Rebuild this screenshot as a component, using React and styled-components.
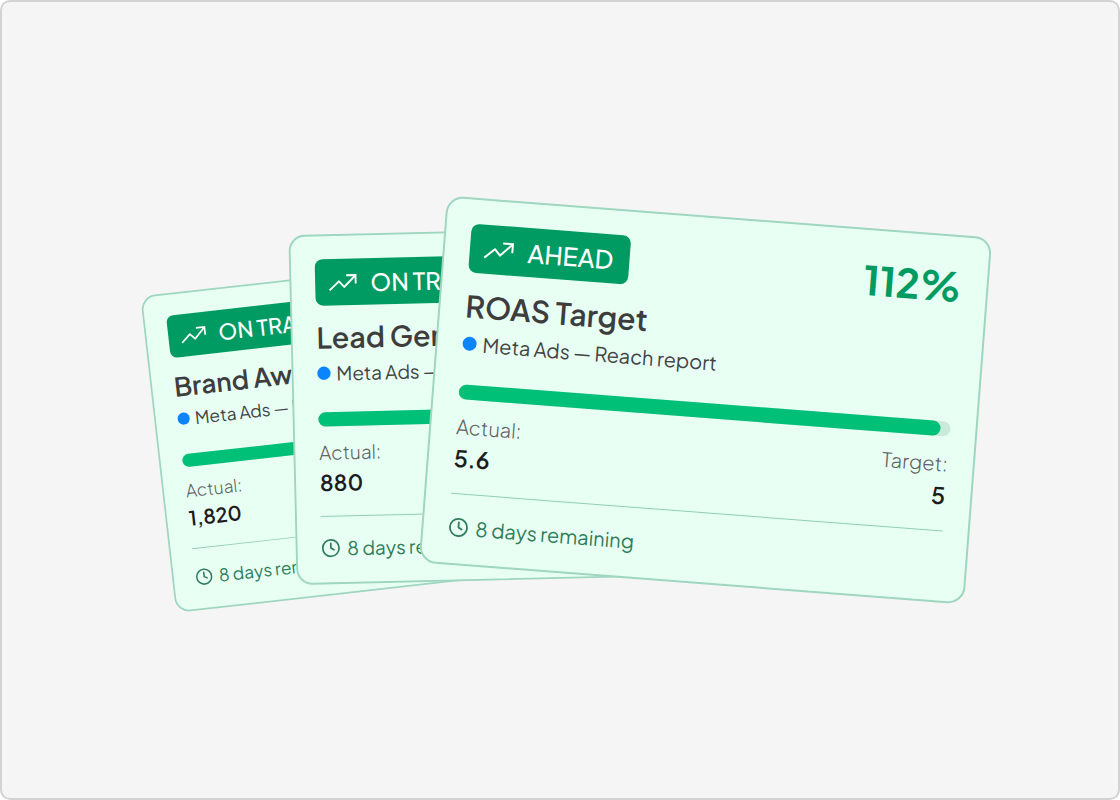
import React from "react";
import styled, { createGlobalStyle } from "styled-components";

const GlobalStyle = createGlobalStyle`
  *, *::before, *::after { box-sizing: border-box; }
  body {
    margin: 0;
    background: #ffffff;
    font-family: "Plus Jakarta Sans", Inter, "Liberation Sans", sans-serif;
  }
`;

const Frame = styled.main`
  display: grid;
  place-items: center;
  min-height: 100vh;
  overflow: hidden;
  border: 2px solid #d3d3d3;
  border-radius: 10px;
  background: #f5f5f5;
`;

const Stack = styled.div`
  display: grid;
  place-items: center;
`;

const Card = styled.article`
  grid-area: 1 / 1;
  display: flex;
  flex-direction: column;
  width: 547px;
  padding: 24px 25px 23px;
  border: 2px solid #9fd6c0;
  border-radius: 17px;
  background: #e8fff4;
  transform: translate(${(p) => p.$x}px, ${(p) => p.$y}px) rotate(${(p) => p.$angle}deg) scale(${(p) => p.$scale});
`;

const Header = styled.header`
  display: flex;
  align-items: flex-start;
  justify-content: space-between;
  height: 56px;
`;

const Badge = styled.span`
  display: flex;
  align-items: center;
  gap: 12px;
  height: 49px;
  padding: 0 16px 0 14px;
  border-radius: 8px;
  background: #009b63;
  color: #ffffff;
  font-size: 25px;
  font-weight: 500;
  line-height: 30px;
  white-space: nowrap;
`;

const Percent = styled.strong`
  color: #009b63;
  font-size: 40px;
  font-weight: 700;
  line-height: 50px;
`;

const Title = styled.h2`
  margin: 8px 0 0;
  color: #3d3d3d;
  font-size: 30px;
  font-weight: 600;
  line-height: 36px;
`;

const Source = styled.p`
  display: flex;
  align-items: center;
  gap: 6px;
  margin: 7px 0 0;
  color: #444444;
  font-size: 20px;
  line-height: 26px;
`;

const Dot = styled.span`
  width: 14px;
  height: 14px;
  border-radius: 50%;
  background: #0a84ff;
`;

const Track = styled.div`
  height: 15px;
  margin-top: 28px;
  border-radius: 8px;
  background: #cbe9db;
`;

const Fill = styled.div`
  width: ${(p) => p.$value}%;
  height: 100%;
  border-radius: 8px;
  background: #00c078;
`;

const Figures = styled.dl`
  display: flex;
  justify-content: space-between;
  margin: 14px 0 0;
`;

const Figure = styled.div`
  text-align: ${(p) => p.$align};
`;

const Label = styled.dt`
  color: #5f6361;
  font-size: 20px;
  font-weight: 300;
  line-height: 26px;
`;

const Value = styled.dd`
  margin: 4px 0 0;
  color: #1c1c1c;
  font-size: 23px;
  font-weight: 600;
  line-height: 30px;
`;

const Footer = styled.footer`
  display: flex;
  align-items: center;
  gap: 7px;
  margin-top: 20px;
  padding-top: 20px;
  border-top: 1px solid #8fceb3;
  color: #2f7d5b;
  font-size: 20px;
  line-height: 26px;
`;

const TrendIcon = () => (
  <svg width="32" height="20" viewBox="0 0 32 20" fill="none" stroke="currentColor" strokeWidth="2" aria-hidden="true">
    <path d="M1 18 L11 8.8 L16.5 14.8 L28.5 2.8" strokeLinejoin="round" />
    <path d="M18.8 2.5 H28.6 V11.5" />
  </svg>
);

const ClockIcon = () => (
  <svg width="20" height="20" viewBox="0 0 20 20" fill="none" stroke="currentColor" strokeWidth="1.8" strokeLinecap="round" strokeLinejoin="round" aria-hidden="true">
    <circle cx="10" cy="10" r="8.6" />
    <path d="M10 5 V10 L13.2 11.8" />
  </svg>
);

const goals = [
  { status: "ON TRACK", title: "Brand Awareness", actual: "1,820", progress: 98, x: -167, y: 28, angle: -6.45, scale: 0.866 },
  { status: "ON TRACK", title: "Lead Generation", actual: "880", progress: 98, x: -8, y: 4, angle: -1.35, scale: 0.951 },
  { status: "AHEAD", title: "ROAS Target", actual: "5.6", target: "5", percent: "112%", progress: 98, x: 145, y: 0, angle: 4.4, scale: 1 },
];

function GoalCard({ goal }) {
  return (
    <Card $x={goal.x} $y={goal.y} $angle={goal.angle} $scale={goal.scale}>
      <Header>
        <Badge>
          <TrendIcon />
          {goal.status}
        </Badge>
        {goal.percent && <Percent>{goal.percent}</Percent>}
      </Header>
      <Title>{goal.title}</Title>
      <Source>
        <Dot />
        Meta Ads — Reach report
      </Source>
      <Track role="progressbar" aria-label={goal.title} aria-valuenow={goal.progress} aria-valuemin={0} aria-valuemax={100}>
        <Fill $value={goal.progress} />
      </Track>
      <Figures>
        <Figure $align="left">
          <Label>Actual:</Label>
          <Value>{goal.actual}</Value>
        </Figure>
        {goal.target && (
          <Figure $align="right">
            <Label>Target:</Label>
            <Value>{goal.target}</Value>
          </Figure>
        )}
      </Figures>
      <Footer>
        <ClockIcon />
        8 days remaining
      </Footer>
    </Card>
  );
}

export default function App() {
  return (
    <>
      <GlobalStyle />
      <Frame>
        <Stack>
          {goals.map((goal) => (
            <GoalCard key={goal.title} goal={goal} />
          ))}
        </Stack>
      </Frame>
    </>
  );
}
